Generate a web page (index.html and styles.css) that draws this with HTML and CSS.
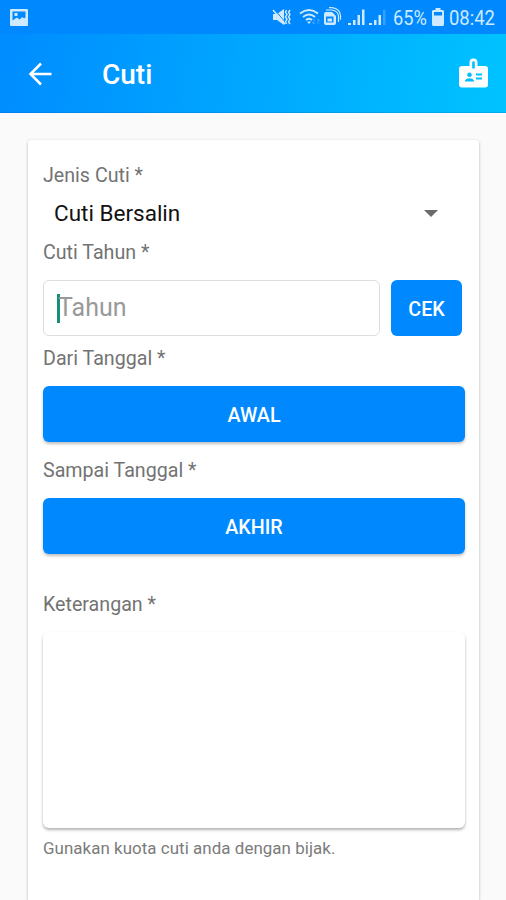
FILE: index.html
```html
<!DOCTYPE html>
<html lang="id">
<head>
<meta charset="utf-8">
<title>Cuti</title>
<link rel="stylesheet" href="styles.css">
</head>
<body>
<div class="status">
  <svg class="status-photo" width="18" height="17" viewBox="0 0 18 17"><path fill="currentColor" fill-rule="evenodd" d="M1 0h16a1 1 0 0 1 1 1v15a1 1 0 0 1-1 1h-16a1 1 0 0 1-1-1v-15a1 1 0 0 1 1-1zM2.500 2.500v9l4.500-3 2.500 2 3-2.500 1.500 1.500 1.500-1v-6zM4.500 4h3v3h-3z"/></svg>
  <svg class="status-icons" width="115" height="22" viewBox="0 0 115 22" fill="currentColor">
    <path d="M1 8h4l7-5v16l-7-5h-4z"/>
    <path d="M2 3l12 14" stroke="#0089ff" stroke-width="1"/>
    <path d="M1 4l12 14" stroke="currentColor" stroke-width="1.500"/>
    <path d="M14.500 4l-1 2.300 1.500 2.300-1.500 2.400 1.500 2.300-1.500 2.400 1 2.300M18 4l-1.500 2.300 1.500 2.300-1.500 2.400 1.500 2.300-1.500 2.400 1.500 2.300" fill="none" stroke="currentColor" stroke-width="1.400"/>
    <path d="M28 7.500q9-7 18 0M31 11q6-5 12 0M34 14q3-2.500 6 0" fill="none" stroke="currentColor" stroke-width="1.900"/>
    <path d="M37 18l-2-2.500h4z"/>
    <path d="M42 13v5l-2-2M46 18v-5l2 2" fill="none" stroke="currentColor" opacity=".3"/>
    <path fill-rule="evenodd" d="M54 6h6l4 4v7a2 2 0 0 1-2 2h-8a2 2 0 0 1-2-2v-9a2 2 0 0 1 2-2zM54 10.500v6h7.500v-6zM55.500 12.500h4.500v3h-4.500z"/>
    <path d="M54 4h6q6 1 6.500 6v6M57 1.700h3q8 1 8.500 8v4" fill="none" stroke="currentColor" stroke-width="1.200"/>
    <path d="M76 17h3v2h-3zM81 14h2.500v5h-2.500zM85.500 9h2.500v10h-2.500zM90 3.500h2.500v15.500h-2.500zM97 17h3v2h-3zM102 14h2.500v5h-2.500zM106.500 9h2.500v10h-2.500z"/>
    <path d="M111 4h2.500v15h-2.500z" opacity=".25"/>
  </svg>
  <span class="status-percent">65%</span>
  <svg class="status-battery" width="12" height="18" viewBox="0 0 12 18"><path fill="currentColor" fill-rule="evenodd" d="M3.500 0h5v2h2a1.500 1.500 0 0 1 1.500 1.500v13a1.500 1.500 0 0 1-1.500 1.500h-9a1.500 1.500 0 0 1-1.500-1.500v-13a1.500 1.500 0 0 1 1.500-1.500h2zM2 4v3.500h8v-3.500z"/></svg>
  <span class="status-time">08:42</span>
</div>
<header class="toolbar">
  <svg class="back" width="24" height="24" viewBox="0 0 24 24" fill="none" stroke="#fff" stroke-width="2.500"><path d="M23.500 12H3M13 1.500L2.500 12 13 22.500"/></svg>
  <h1 class="title">Cuti</h1>
  <svg class="badge" width="29" height="30" viewBox="0 0 29 30"><path fill="#fff" fill-rule="evenodd" d="M3 8h7.500V4.500a4 4 0 0 1 8 0V8H26a3 3 0 0 1 3 3v15.500a3 3 0 0 1-3 3H3a3 3 0 0 1-3-3V11a3 3 0 0 1 3-3zM13.200 4.500v6h2.600v-6a1.300 1.300 0 0 0-2.600 0zM10.500 14.500a2.300 2.300 0 1 0 .01 0zM6 23.500h9v-1q-1-2.300-4.500-2.300T6 22.500zM17 15.500v2h6v-2zM17 19.500v2h6v-2z"/></svg>
</header>
<main class="card">
  <div class="label">Jenis Cuti *</div>
  <div class="select"><span class="select-value">Cuti Bersalin</span><svg width="14" height="7" viewBox="0 0 14 7"><path fill="#6b6b6b" d="M0 0h14L7 7z"/></svg></div>
  <div class="label">Cuti Tahun *</div>
  <div class="year-row">
    <div class="field"><span class="caret"></span><span class="hint">Tahun</span></div>
    <div class="button check">CEK</div>
  </div>
  <div class="label from">Dari Tanggal *</div>
  <div class="button wide">AWAL</div>
  <div class="label until">Sampai Tanggal *</div>
  <div class="button wide">AKHIR</div>
  <div class="label remark">Keterangan *</div>
  <div class="textarea"></div>
  <div class="note">Gunakan kuota cuti anda dengan bijak.</div>
</main>
</body>
</html>
```
FILE: styles.css
```css
* { box-sizing: border-box; }
body { margin: 0; height: 900px; overflow: hidden; display: flex; flex-direction: column; background: #fafafa; font-family: Roboto, sans-serif; }
svg { display: block; flex: none; }
.status { flex: none; height: 34px; display: flex; align-items: center; padding: 0 10px; background: #0089ff; color: #cfeaff; font-size: 20.500px; line-height: 34px; white-space: nowrap; }
.status-icons { margin-left: 244px; }
.status-percent { width: 34px; margin: 2px 0 0 6px; transform: scaleX(.89); transform-origin: left; }
.status-battery { margin-left: 5px; }
.status-time { margin: 2px 0 0 5px; transform: scaleX(.9); transform-origin: left; }
.toolbar { flex: none; height: 79px; display: flex; align-items: center; padding: 0 18px 0 28px; background: linear-gradient(100deg, #008cff, #00c3ff); box-shadow: inset 0 -1px 0 rgba(0, 70, 160, .18); }
.title { margin: 2px 0 0 50px; font-size: 28px; line-height: 36px; font-weight: 500; color: #fff; }
.badge { margin: 0 0 2px auto; }
.card { flex: 1; margin: 27px 27px 0 28px; padding: 22px 14px 0 15px; background: #fff; border-radius: 3px 3px 0 0; box-shadow: 0 1px 3px rgba(0, 0, 0, .3); }
.label { height: 26px; line-height: 28px; font-size: 19.650px; color: #737373; }
.select { height: 51px; display: flex; align-items: center; justify-content: space-between; padding: 0 27px 0 11px; font-size: 22.500px; color: #111; }
.select-value { padding-bottom: 2px; }
.year-row { display: flex; gap: 11px; margin-top: 15px; padding-right: 3px; }
.field { flex: 1; height: 56px; display: flex; align-items: center; padding: 0 0 0 13px; border: 1px solid #dedede; border-radius: 6px; }
.caret { width: 3px; height: 29px; margin-right: -2px; background: #159077; }
.hint { font-size: 25px; line-height: 30px; padding-bottom: 1px; color: #999; }
.button { height: 56px; display: flex; align-items: center; justify-content: center; padding-top: 2px; border-radius: 6px; background: #0089ff; color: #fff; font-size: 19.700px; font-weight: 500; box-shadow: 0 2px 3px rgba(0, 0, 0, .25); }
.check { width: 71px; box-shadow: none; }
.wide { margin-top: 15px; }
.from { margin-top: 9px; }
.until { margin-top: 15px; }
.remark { margin-top: 37px; }
.textarea { height: 196px; margin-top: 15px; border-radius: 6px; box-shadow: 0 2px 3px rgba(0, 0, 0, .3); }
.note { margin-top: 8px; height: 24px; line-height: 24px; font-size: 16.900px; letter-spacing: .06px; color: #7b7b7b; }
```
